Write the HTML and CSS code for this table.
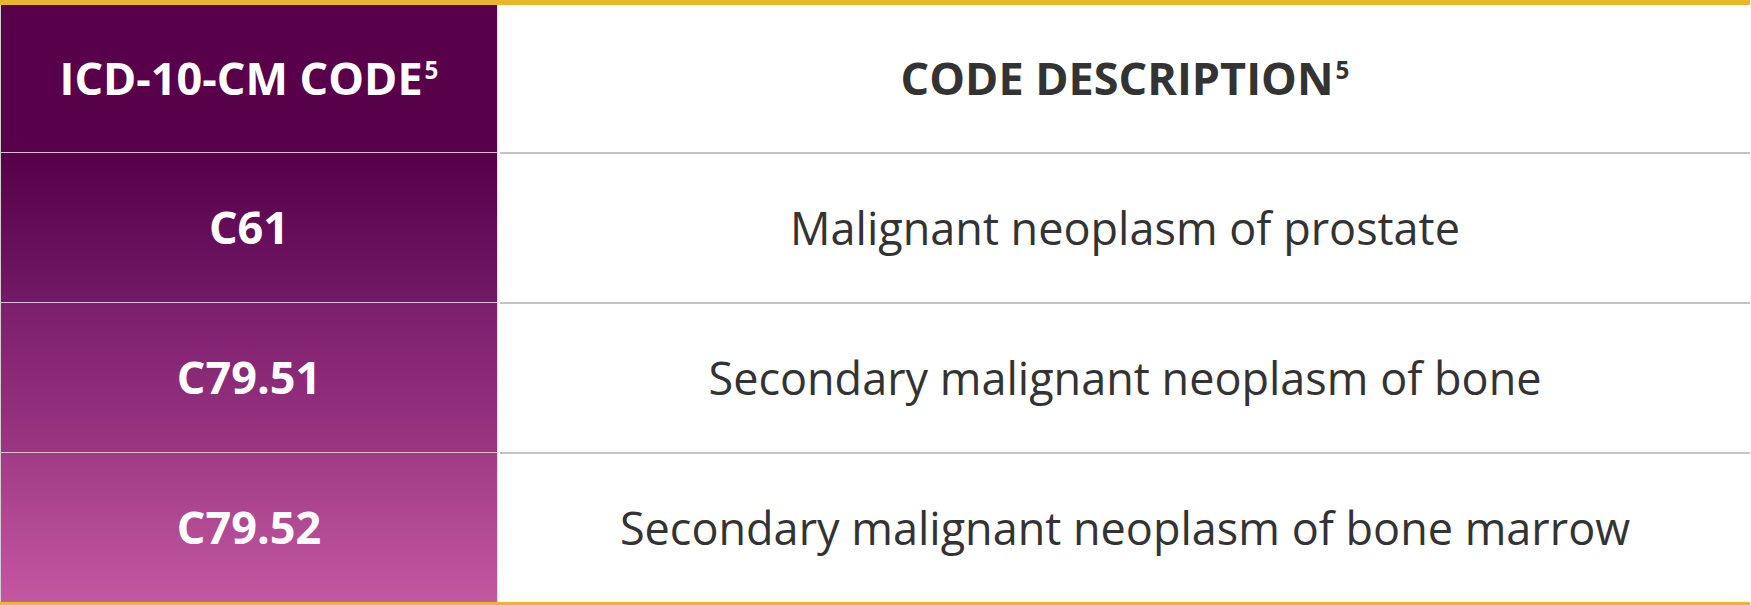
FILE: index.html
```html
<!DOCTYPE html>
<html>
<head>
<meta charset="utf-8">
<link rel="stylesheet" href="styles.css">
</head>
<body>
<div class="table">
  <div class="row head">
    <div class="code">ICD-10-CM CODE<sup>5</sup></div>
    <div class="desc">CODE DESCRIPTION<sup>5</sup></div>
  </div>
  <div class="row r1">
    <div class="code">C61</div>
    <div class="desc">Malignant neoplasm of prostate</div>
  </div>
  <div class="row r2">
    <div class="code">C79.51</div>
    <div class="desc">Secondary malignant neoplasm of bone</div>
  </div>
  <div class="row r3">
    <div class="code">C79.52</div>
    <div class="desc">Secondary malignant neoplasm of bone marrow</div>
  </div>
</div>
</body>
</html>
```

FILE: styles.css
```css
html, body {
  margin: 0;
  padding: 0;
  background: #ffffff;
}
body {
  font-family: "Open Sans", "Liberation Sans", sans-serif;
}
.table {
  width: 1750px;
  border-top: 5px solid #e8b72c;
  border-bottom: 4px solid #e8b72c;
  display: flex;
  flex-direction: column;
}
.row {
  display: grid;
  grid-template-columns: 498px 1fr;
  height: 150px;
}
.row.head {
  height: 147px;
}
.code {
  display: flex;
  align-items: center;
  justify-content: center;
  color: #ffffff;
  font-weight: 700;
  font-size: 45px;
  border-left: 1px solid #cfcfcf;
  border-right: 1px solid #ead6e4;
  box-sizing: border-box;
  padding-bottom: 2px;
}
.desc {
  display: flex;
  align-items: center;
  justify-content: center;
  color: #333333;
  font-size: 45px;
  margin-left: 2px;
  padding-bottom: 2px;
}
.head .desc {
  font-weight: 700;
}
.row + .row .code {
  border-top: 1px solid #d9bfd6;
}
.row + .row .desc {
  border-top: 2px solid #c4c4c4;
}
.head .code {
  background: #580049;
}
.r1 .code {
  background: linear-gradient(#560049, #731966);
}
.r2 .code {
  background: linear-gradient(#7b1e6c, #9b3682);
}
.r3 .code {
  background: linear-gradient(#a03b86, #c458a1);
}
sup {
  font-size: 0.54em;
  line-height: 0;
  vertical-align: baseline;
  position: relative;
  top: -0.3em;
  margin-left: 2px;
}
```
